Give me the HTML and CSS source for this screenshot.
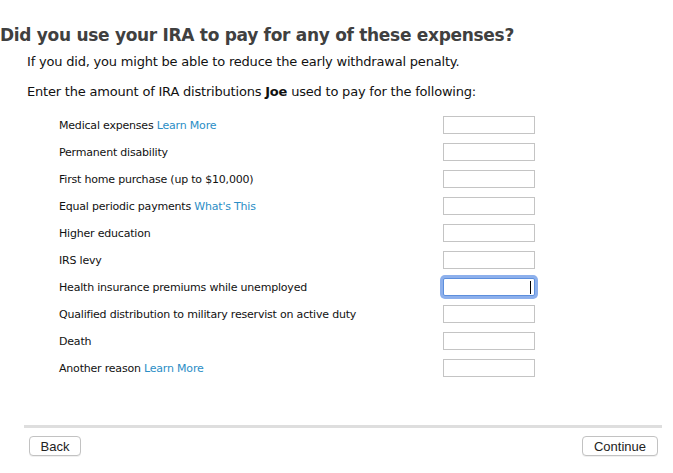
FILE: index.html
```html
<!DOCTYPE html>
<html>
<head>
<meta charset="utf-8">
<link rel="stylesheet" href="styles.css">
</head>
<body>
<div class="page">
  <h1 class="title">Did you use your IRA to pay for any of these expenses?</h1>
  <p class="sub">If you did, you might be able to reduce the early withdrawal penalty.</p>
  <p class="sub enter">Enter the amount of IRA distributions <b>Joe</b> used to pay for the following:</p>
  <div class="rows">
    <div class="row"><span class="label">Medical expenses <a class="link">Learn More</a></span><span class="field"><input class="box" type="text"></span></div>
    <div class="row"><span class="label">Permanent disability</span><span class="field"><input class="box" type="text"></span></div>
    <div class="row"><span class="label">First home purchase (up to $10,000)</span><span class="field"><input class="box" type="text"></span></div>
    <div class="row"><span class="label">Equal periodic payments <a class="link">What's This</a></span><span class="field"><input class="box" type="text"></span></div>
    <div class="row"><span class="label">Higher education</span><span class="field"><input class="box" type="text"></span></div>
    <div class="row"><span class="label">IRS levy</span><span class="field"><input class="box" type="text"></span></div>
    <div class="row"><span class="label">Health insurance premiums while unemployed</span><span class="field"><input class="box focused" type="text"><span class="caret"></span></span></div>
    <div class="row"><span class="label">Qualified distribution to military reservist on active duty</span><span class="field"><input class="box" type="text"></span></div>
    <div class="row"><span class="label">Death</span><span class="field"><input class="box" type="text"></span></div>
    <div class="row"><span class="label">Another reason <a class="link">Learn More</a></span><span class="field"><input class="box" type="text"></span></div>
  </div>
  <div class="footer">
    <div class="divider"></div>
    <div class="buttons">
      <button class="btn back">Back</button>
      <button class="btn cont">Continue</button>
    </div>
  </div>
</div>
</body>
</html>
```

FILE: styles.css
```css
html, body {
  margin: 0;
  padding: 0;
  background: #ffffff;
}
.page {
  font-family: "DejaVu Sans", "Noto Sans", sans-serif;
  color: #111;
  width: 673px;
  height: 473px;
  overflow: hidden;
}
.title {
  margin: 24px 0 0 0;
  font-size: 17px;
  line-height: 22px;
  font-weight: bold;
  color: #404040;
  letter-spacing: -0.3px;
  white-space: nowrap;
}
.sub {
  margin: 7px 0 0 27px;
  font-size: 13px;
  line-height: 18px;
  color: #111;
  letter-spacing: -0.2px;
  white-space: nowrap;
}
.enter {
  margin-top: 12px;
}
.rows {
  margin: 10px 0 0 59px;
  display: flex;
  flex-direction: column;
}
.row {
  height: 27px;
  display: flex;
  align-items: center;
  justify-content: space-between;
  width: 476px;
}
.label {
  font-size: 11px;
  line-height: 14px;
  color: #111;
  letter-spacing: -0.2px;
  margin-top: 3px;
  white-space: nowrap;
}
.link {
  color: #2b8ec6;
}
.field {
  position: relative;
  display: flex;
  align-items: center;
}
.box {
  box-sizing: border-box;
  width: 92px;
  height: 18px;
  border: 1px solid #c4c4c4;
  border-radius: 0;
  margin: 0;
  padding: 0;
  background: #fff;
  outline: none;
}
.box.focused {
  border: 1px solid #5d8fdc;
  box-shadow: 0 0 0 3px #8db0ec;
  border-radius: 2px;
}
.caret {
  position: absolute;
  right: 4px;
  top: 3px;
  width: 1px;
  height: 13px;
  background: #000;
}
.footer {
  margin: 44px 11px 0 24px;
}
.divider {
  height: 3px;
  background: #dedede;
}
.buttons {
  margin-top: 8px;
  display: flex;
  justify-content: space-between;
  padding: 0 4px 0 5px;
}
.btn {
  box-sizing: border-box;
  height: 20px;
  font-family: "Liberation Sans", Arial, sans-serif;
  font-size: 13px;
  color: #222;
  background: #fff;
  border: 1px solid #c2c2c2;
  border-radius: 4px;
  padding: 0;
  box-shadow: 0 1px 0 rgba(0,0,0,0.06);
}
.back {
  width: 52px;
}
.cont {
  width: 76px;
}
```
